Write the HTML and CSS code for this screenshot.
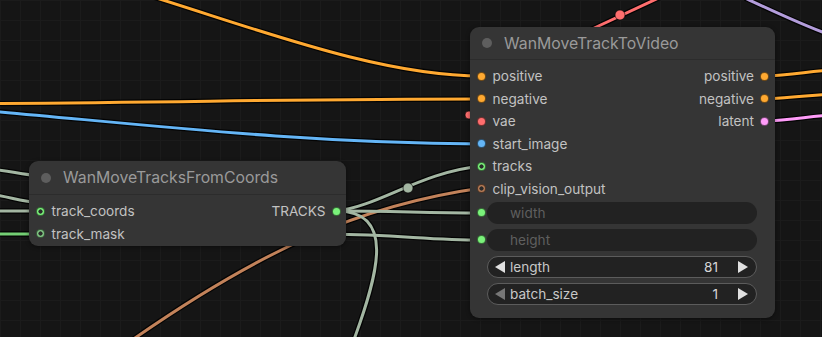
FILE: index.html
```html
<!DOCTYPE html>
<html>
<head>
<meta charset="utf-8">
<link rel="stylesheet" href="styles.css">
</head>
<body>
<div class="canvas">
  <svg class="wires" width="822" height="337" viewBox="0 0 822 337">
    <g class="shadow">
      <path d="M150,-4 C260,30 380,76 482,76"/>
      <path d="M-10,103.5 C200,102 300,99 482,99"/>
      <path d="M-10,111 C150,125 300,143 482,144"/>
      <path d="M590,30 L665,-5"/>
      <path d="M745,-2 C775,12 800,24 830,35"/>
      <path d="M764,76 C790,75 805,72 830,70"/>
      <path d="M764,99 C790,98 805,96 830,94"/>
      <path d="M764,121 C790,120 805,117 830,115"/>
      <path d="M-10,169 C10,171 20,174 40,176"/>
      <path d="M-10,194 C10,197 20,201 40,203"/>
      <path d="M-10,211 L40,211"/>
      <path d="M-10,234 L40,234"/>
      <path d="M125,345 C260,250 360,205 482,188"/>
      <path d="M336,211 C380,206 420,172 482,166"/>
      <path d="M336,211 C400,211 420,213 482,213"/>
      <path d="M336,211 C395,211 380,270 352,345"/>
      <path d="M330,234 C400,235 430,240 482,240"/>
    </g>
    <path class="w orange" d="M150,-4 C260,30 380,76 482,76"/>
    <path class="w orange" d="M-10,103.5 C200,102 300,99 482,99"/>
    <path class="w blue" d="M-10,111 C150,125 300,143 482,144"/>
    <path class="w red" d="M590,30 L665,-5"/>
    <circle class="dotred" cx="620" cy="15" r="5"/>
    <circle class="dotred" cx="469" cy="115" r="4"/>
    <path class="w purple" d="M745,-2 C775,12 800,24 830,35"/>
    <path class="w orange" d="M764,76 C790,75 805,72 830,70"/>
    <path class="w orange" d="M764,99 C790,98 805,96 830,94"/>
    <path class="w pink" d="M764,121 C790,120 805,117 830,115"/>
    <path class="w sage" d="M-10,169 C10,171 20,174 40,176"/>
    <path class="w sage" d="M-10,194 C10,197 20,201 40,203"/>
    <path class="w sage" d="M-10,211 L40,211"/>
    <path class="w mask" d="M-10,234 L40,234"/>
    <path class="w brown" d="M125,345 C260,250 360,205 482,188"/>
    <path class="w sage" d="M336,211 C380,206 420,172 482,166"/>
    <circle class="dotsage" cx="408" cy="188" r="5"/>
    <path class="w sage" d="M336,211 C400,211 420,213 482,213"/>
    <path class="w sage" d="M336,211 C395,211 380,270 352,345"/>
    <path class="w sage" d="M330,234 C400,235 430,240 482,240"/>
  </svg>

  <div class="node node-coords">
    <div class="title"><span class="tdot"></span><span>WanMoveTracksFromCoords</span></div>
    <div class="slots">
      <div class="row">
        <div class="in"><span class="dot ring green"></span><span>track_coords</span></div>
        <div class="out"><span>TRACKS</span><span class="dot green"></span></div>
      </div>
      <div class="row">
        <div class="in"><span class="dot ring mutedgreen"></span><span>track_mask</span></div>
      </div>
    </div>
  </div>

  <div class="node node-video">
    <div class="title"><span class="tdot"></span><span>WanMoveTrackToVideo</span></div>
    <div class="slots">
      <div class="row">
        <div class="in"><span class="dot orangef"></span><span>positive</span></div>
        <div class="out"><span>positive</span><span class="dot orangef"></span></div>
      </div>
      <div class="row">
        <div class="in"><span class="dot orangef"></span><span>negative</span></div>
        <div class="out"><span>negative</span><span class="dot orangef"></span></div>
      </div>
      <div class="row">
        <div class="in"><span class="dot redf"></span><span>vae</span></div>
        <div class="out"><span>latent</span><span class="dot pinkf"></span></div>
      </div>
      <div class="row">
        <div class="in"><span class="dot bluef"></span><span>start_image</span></div>
      </div>
      <div class="row">
        <div class="in"><span class="dot ring green"></span><span>tracks</span></div>
      </div>
      <div class="row">
        <div class="in"><span class="dot ring brownf"></span><span>clip_vision_output</span></div>
      </div>
    </div>
    <div class="widgets">
      <div class="wrow">
        <span class="dot green wdot"></span>
        <div class="widget disabled"><span class="wlabel">width</span></div>
      </div>
      <div class="wrow">
        <span class="dot green wdot"></span>
        <div class="widget disabled"><span class="wlabel">height</span></div>
      </div>
      <div class="wrow">
        <span class="wspacer"></span>
        <div class="widget num">
          <span class="arrow left"></span>
          <span class="wlabel">length</span>
          <span class="wval">81</span>
          <span class="arrow right"></span>
        </div>
      </div>
      <div class="wrow">
        <span class="wspacer"></span>
        <div class="widget num">
          <span class="arrow left dim"></span>
          <span class="wlabel">batch_size</span>
          <span class="wval">1</span>
          <span class="arrow right"></span>
        </div>
      </div>
    </div>
  </div>
</div>
</body>
</html>
```

FILE: styles.css
```css
* { box-sizing: border-box; }
html, body { margin: 0; padding: 0; background: #151515; }
.canvas {
  position: relative;
  width: 822px;
  height: 337px;
  overflow: hidden;
  background-color: #151515;
  background-image:
    linear-gradient(#1b1b1b 1px, transparent 1px),
    linear-gradient(90deg, #1b1b1b 1px, transparent 1px);
  background-size: 20px 20px;
  font-family: Inter, "Noto Sans", sans-serif;
}
.wires { position: absolute; left: 0; top: 0; }
.shadow path { fill: none; stroke: #000; stroke-width: 5.5; stroke-opacity: 0.85; }
.w { fill: none; stroke-width: 3; }
.orange { stroke: #ffa931; }
.blue { stroke: #64b5f6; }
.red { stroke: #ff6e6e; }
.purple { stroke: #b39ddb; }
.pink { stroke: #ff9cf9; }
.sage { stroke: #a3b6a2; }
.mask { stroke: #74cf74; }
.brown { stroke: #c2825a; }
.dotred { fill: #ff6e6e; stroke: #000; stroke-opacity: .6; stroke-width: 1; }
.dotsage { fill: #a3b6a2; stroke: #000; stroke-opacity: .6; stroke-width: 1; }

.node {
  position: absolute;
  background: #353535;
  border-radius: 9px;
  box-shadow: 0 1px 4px rgba(0,0,0,.45);
  color: #c2c2c2;
  font-size: 13.6px;
}
.node-coords { left: 29px; top: 161px; width: 317px; height: 85px; }
.node-video { left: 470px; top: 27px; width: 305px; height: 291px; }
.title {
  display: flex;
  align-items: center;
  gap: 12px;
  padding-left: 12px;
  height: 34px;
  border-bottom: 1px solid #2c2c2c;
  color: #9a9a9a;
  font-size: 15.8px;
}
.node-video .title { height: 33px; }
.tdot { width: 10px; height: 10px; border-radius: 50%; background: #5e5e5e; }
.slots { padding-top: 5px; display: flex; flex-direction: column; }
.row { height: 22.5px; display: flex; align-items: center; justify-content: space-between; }
.in { display: flex; align-items: center; gap: 6.5px; padding-left: 7px; }
.out { display: flex; align-items: center; gap: 6px; padding-right: 6px; margin-left: auto; }
.node-coords .out { padding-right: 5.5px; }
.dot {
  width: 9px; height: 9px; border-radius: 50%;
  border: 1px solid rgba(0,0,0,.55);
  flex: none;
}
.orangef { background: #ffa931; }
.redf { background: #ff6e6e; }
.bluef { background: #64b5f6; }
.pinkf { background: #ff9cf9; }
.green { background: #7bf27b; }
.mutedgreen { background: #81c784; }
.brownf { background: #b57a55; }
.ring.green { background: radial-gradient(circle, #2a2a2a 0 1.8px, #7bf27b 2.4px); }
.ring.mutedgreen { background: radial-gradient(circle, #2a2a2a 0 1.8px, #81c784 2.4px); }
.ring.brownf { background: radial-gradient(circle, #2a2a2a 0 1.8px, #b57a55 2.4px); }

.widgets { display: flex; flex-direction: column; gap: 5px; padding-top: 1.5px; }
.wrow { display: flex; align-items: center; padding-left: 7px; padding-right: 18px; height: 22px; }
.wdot { margin-right: 1px; }
.wspacer { width: 10px; flex: none; }
.widget {
  flex: 1;
  height: 22px;
  border-radius: 11px;
  background: #222222;
  display: flex;
  align-items: center;
  padding: 0 8px 0 23px;
}
.widget.disabled { color: #5f5f5f; }
.widget.num {
  border: 1px solid #5c5c5c;
  padding-left: 7px;
  color: #c8c8c8;
}
.wlabel { flex: none; }
.num .wlabel { margin-left: 5px; }
.wval { margin-left: auto; margin-right: 20px; color: #d6d6d6; }
.arrow { width: 0; height: 0; border-top: 6px solid transparent; border-bottom: 6px solid transparent; flex: none; }
.arrow.left { border-right: 10px solid #e0e0e0; }
.arrow.left.dim { border-right-color: #777; }
.arrow.right { border-left: 10px solid #e0e0e0; }
```
